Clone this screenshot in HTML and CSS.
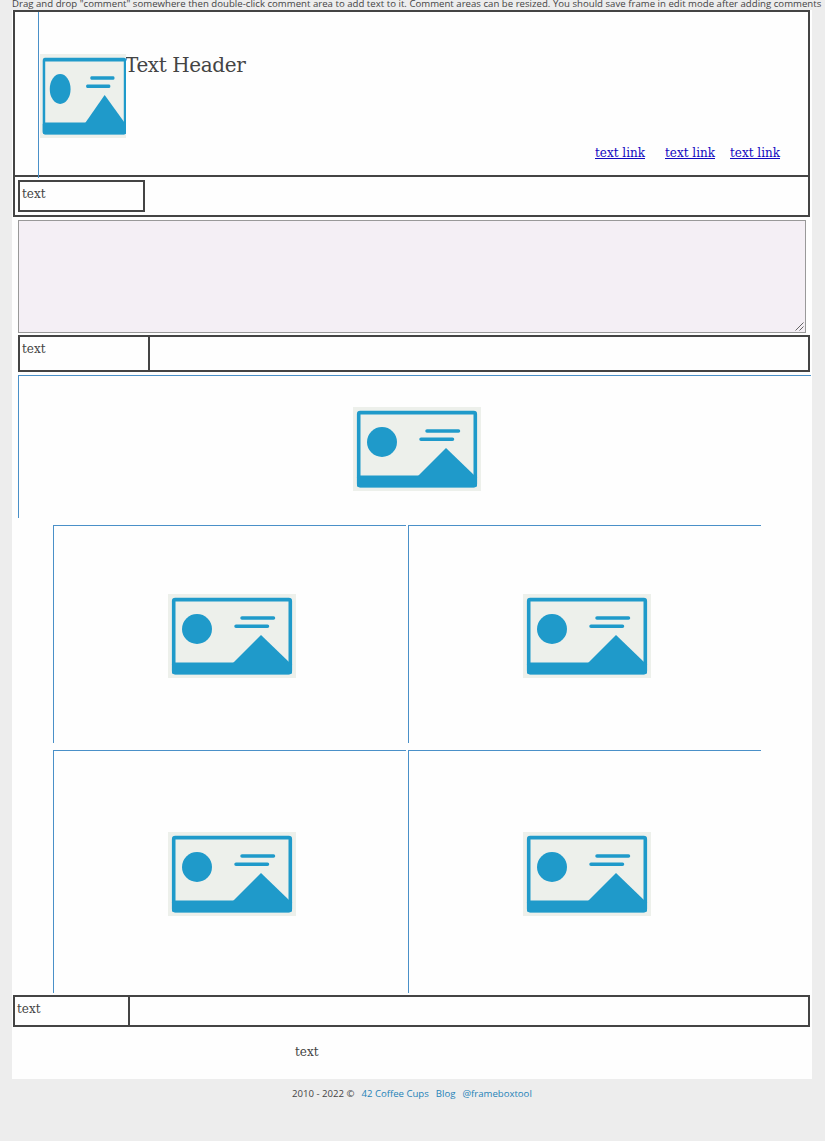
FILE: index.html
```html
<!DOCTYPE html>
<html lang="en">
<head>
<meta charset="utf-8">
<title>Frame</title>
<link rel="stylesheet" href="styles.css">
</head>
<body>
<svg class="defs" width="0" height="0" aria-hidden="true">
  <symbol id="picture" viewBox="0 0 128 84" preserveAspectRatio="none">
    <rect width="128" height="84" fill="#edf0eb"/>
    <g fill="#1f9aca">
      <rect x="5.7" y="5.6" width="116.600" height="73" rx="1.500" fill="none" stroke="#1f9aca" stroke-width="3.600"/>
      <rect x="4" y="68.500" width="120" height="11.800" rx="2"/>
      <circle cx="29" cy="35" r="15"/>
      <path d="M64.500 69.500 93 41 121.500 68.500V71H64.500Z"/>
      <path d="M74 24H105.500M68 32.200H99.500" stroke="#1f9aca" stroke-width="3.500" stroke-linecap="round"/>
    </g>
  </symbol>
</svg>
<p class="hint">Drag and drop "comment" somewhere then double-click comment area to add text to it. Comment areas can be resized. You should save frame in edit mode after adding comments</p>
<main class="page">
  <header class="header">
    <div class="brand">
      <div class="logo"><svg class="logo-picture"><use href="#picture"/></svg></div>
      <h1 class="title">Text Header</h1>
    </div>
    <nav class="links"><a href="#">text link</a><a href="#">text link</a><a href="#">text link</a></nav>
  </header>
  <div class="toolbar"><div class="tag">text</div></div>
  <div class="area"><svg class="grip" viewBox="0 0 9 9"><path d="M0.500 8.500 8.500 0.500M4.500 8.500 8.500 4.500"/></svg></div>
  <div class="bar bar-inset"><div class="bar-label">text</div></div>
  <section class="hero"><svg class="picture"><use href="#picture"/></svg></section>
  <section class="gallery">
    <div class="cell"><svg class="picture"><use href="#picture"/></svg></div>
    <div class="cell"><svg class="picture"><use href="#picture"/></svg></div>
    <div class="cell"><svg class="picture"><use href="#picture"/></svg></div>
    <div class="cell"><svg class="picture"><use href="#picture"/></svg></div>
  </section>
  <div class="bar bar-bottom"><div class="bar-label">text</div></div>
  <p class="note">text</p>
</main>
<footer class="footer"><span>2010 - 2022 ©</span><a href="#">42 Coffee Cups</a><a href="#">Blog</a><a href="#">@frameboxtool</a></footer>
</body>
</html>
```
FILE: styles.css
```css
* { box-sizing: border-box; }
body {
  margin: 0;
  height: 1141px;
  overflow: hidden;
  background: #ededed;
  color: #444;
  font: 12px/16px "DejaVu Serif", serif;
}
h1, p { margin: 0; font-weight: normal; }
.defs { position: absolute; }
.hint {
  height: 10px;
  padding-left: 12px;
  font: 9.6px/8px "Open Sans", sans-serif;
  letter-spacing: 0.02px;
  white-space: nowrap;
}
.page {
  display: flex;
  flex-direction: column;
  width: 800px;
  height: 1069px;
  margin-left: 12px;
  background: #fefefe;
}
.header {
  position: relative;
  display: flex;
  flex-direction: column;
  justify-content: space-between;
  width: 797px;
  height: 167px;
  margin-left: 1px;
  padding: 42px 27px 14px 25px;
  border: 2px solid #444;
}
.header::before {
  content: "";
  position: absolute;
  left: 23px;
  top: 0;
  width: 1px;
  height: 166px;
  background: #4a90c8;
}
.brand { display: flex; height: 84px; }
.logo { width: 86px; height: 84px; overflow: hidden; }
.logo-picture { display: block; width: 89px; height: 84px; filter: blur(0.5px); }
.title { margin: -2px 0 0 -1px; font-size: 20px; line-height: 26px; letter-spacing: -0.4px; }
.links { display: flex; justify-content: flex-end; }
.links a { width: 51px; color: #1208c0; white-space: nowrap; }
.links a + a { margin-left: 19px; }
.links a:last-child { margin-left: 14px; }
.toolbar {
  width: 797px;
  height: 40px;
  margin-left: 1px;
  padding: 3px;
  border: 2px solid #444;
  border-top: 0;
}
.tag { width: 127px; height: 32px; padding: 4px 2px; border: 2px solid #444; }
.area {
  display: flex;
  justify-content: flex-end;
  align-items: flex-end;
  width: 788px;
  height: 113px;
  margin: 3px 0 2px 6px;
  padding: 1px;
  border: 1px solid #999;
  background: #f4eff5;
}
.grip { width: 9px; height: 9px; fill: none; stroke: #555; stroke-width: 0.9; }
.bar { flex: none; border: 2px solid #444; }
.bar-label { height: 100%; padding: 4px 2px; border-right: 2px solid #444; }
.bar-inset { width: 792px; height: 37px; margin-left: 6px; }
.bar-inset .bar-label { width: 130px; }
.bar-bottom { width: 797px; height: 32px; margin: 2px 0 0 1px; }
.bar-bottom .bar-label { width: 115px; }
.hero {
  width: 793px;
  height: 143px;
  margin: 3px 0 7px 6px;
  padding: 31px 0 0 334px;
  border: solid #4a90c8;
  border-width: 1px 0 0 1px;
}
.picture { display: block; width: 128px; height: 84px; filter: blur(0.5px); }
.gallery {
  display: grid;
  grid-template: 218px 243px / 353px 353px;
  gap: 7px 2px;
  margin-left: 41px;
}
.cell {
  padding: 68px 0 0 114px;
  border: solid #4a90c8;
  border-width: 1px 0 0 1px;
}
.cell:nth-child(n + 3) { padding-top: 81px; }
.note { margin: 17px 0 0 283px; }
.footer {
  display: flex;
  padding: 8px 0 0 292px;
  font: 9.6px/14px "Open Sans", sans-serif;
}
.footer a { color: #1f83b8; text-decoration: none; margin-left: 7px; }
```
